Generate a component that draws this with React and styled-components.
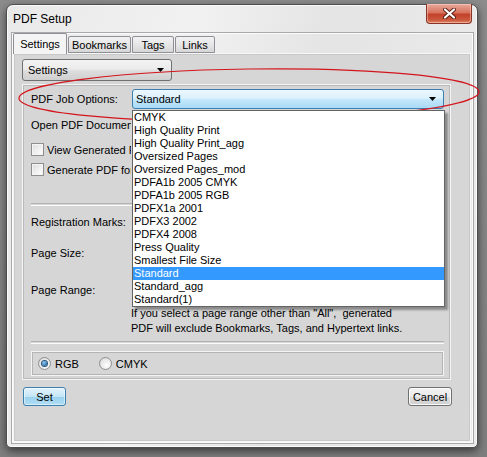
import React from 'react'
import styled, { createGlobalStyle } from 'styled-components'

const jobOptions = [
  'CMYK',
  'High Quality Print',
  'High Quality Print_agg',
  'Oversized Pages',
  'Oversized Pages_mod',
  'PDFA1b 2005 CMYK',
  'PDFA1b 2005 RGB',
  'PDFX1a 2001',
  'PDFX3 2002',
  'PDFX4 2008',
  'Press Quality',
  'Smallest File Size',
  'Standard',
  'Standard_agg',
  'Standard(1)',
]

// widths taken from the screenshot
const tabs = [
  { name: 'Settings', width: 54 },
  { name: 'Bookmarks', width: 63 },
  { name: 'Tags', width: 42 },
  { name: 'Links', width: 40 },
]

function Arrow() {
  return (
    <svg width="7" height="4" viewBox="0 0 7 4">
      <polygon points="0,0 7,0 3.5,4" fill="#000" />
    </svg>
  )
}

function App() {
  return (
    <Stage>
      <GlobalStyle />
      <Window>
        <TitleBar>
          <Title>PDF Setup</Title>
          <CloseButton>
            <svg width="13" height="11" viewBox="0 0 13 11">
              <path d="M2 1.5 L11 9.5 M11 1.5 L2 9.5" stroke="#5a1d14" strokeWidth="4" strokeLinecap="round" />
              <path d="M2 1.5 L11 9.5 M11 1.5 L2 9.5" stroke="#fff" strokeWidth="2.2" strokeLinecap="round" />
            </svg>
          </CloseButton>
        </TitleBar>

        <Client>
          <TabStrip>
            {tabs.map((t, i) => (
              <Tab key={t.name} $active={i === 0} $width={t.width}>{t.name}</Tab>
            ))}
          </TabStrip>

          <TabPanel>
            <Combo $width={150}>
              <span>Settings</span>
              <Arrow />
            </Combo>

            <GroupPanel>
              <Row $mt={0} $h={20}>
                <Label>PDF Job Options:</Label>
                <ComboWrap>
                  <Combo $focus>
                    <span>Standard</span>
                    <Arrow />
                  </Combo>
                  <DropList>
                    {jobOptions.map((o) => (
                      <DropItem key={o} $selected={o === 'Standard'}>{o}</DropItem>
                    ))}
                  </DropList>
                </ComboWrap>
              </Row>

              {/* these rows run under the open list, so they are clipped at its edge */}
              <Row $mt={8} $h={16}>
                <Label $clip>Open PDF Document after generation</Label>
              </Row>

              <Row $mt={9} $h={15}>
                <CheckBox />
                <CheckText>View Generated PDF</CheckText>
              </Row>
              <Row $mt={5} $h={15}>
                <CheckBox />
                <CheckText>Generate PDF for Selection</CheckText>
              </Row>

              <Separator $mt={26} />

              <Row $mt={8} $h={16}>
                <Label>Registration Marks:</Label>
              </Row>
              <Row $mt={15} $h={16}>
                <Label>Page Size:</Label>
              </Row>
              <Row $mt={21} $h={16}>
                <Label>Page Range:</Label>
              </Row>

              <Note>
                If you select a page range other than "All",&nbsp; generated
                <br />
                PDF will exclude Bookmarks, Tags, and Hypertext links.
              </Note>

              <Separator $mt={5} />

              <RadioBox>
                <RadioOption>
                  <Radio $checked />
                  <span>RGB</span>
                </RadioOption>
                <RadioOption>
                  <Radio />
                  <span>CMYK</span>
                </RadioOption>
              </RadioBox>
            </GroupPanel>

            <ButtonRow>
              <PushButton $default $width={43}>Set</PushButton>
              <PushButton $width={44}>Cancel</PushButton>
            </ButtonRow>
          </TabPanel>
        </Client>
      </Window>

      <Annotation width="487" height="457" viewBox="0 0 487 457">
        <ellipse cx="249" cy="95" rx="230" ry="26" transform="rotate(-0.8 249 95)" fill="none" stroke="#d3161d" strokeWidth="1.2" />
      </Annotation>
    </Stage>
  )
}

export default App

const GlobalStyle = createGlobalStyle`
  html, body {
    margin: 0;
    padding: 0;
    width: 487px;
    height: 457px;
    overflow: hidden;
    background: #8a8a8a;
  }
  body {
    font-family: "Liberation Sans", Arial, sans-serif;
    font-size: 11px;
    color: #000;
  }
`

const Stage = styled.div`
    position: relative;
    width: 487px;
    height: 457px;
    padding: 4px 0 0 6px;
    box-sizing: border-box;
    background: linear-gradient(180deg, #8c8c8c 0%, #7e7e7e 100%);
`

const Window = styled.div`
    width: 472px;
    height: 444px;
    box-sizing: border-box;
    display: flex;
    flex-direction: column;
    padding: 0 4px 4px 5px;
    border: 1px solid #4d4d4d;
    border-radius: 7px 7px 5px 5px;
    background: linear-gradient(100deg, #e9e9e9 0%, #f1f1f1 35%, #e4e4e4 60%, #ececec 100%);
    box-shadow: 0 3px 9px rgba(0, 0, 0, 0.55), inset 0 0 0 1px #fafafa;
`

const TitleBar = styled.div`
    height: 28px;
    display: flex;
    align-items: flex-start;
    justify-content: space-between;
`

const Title = styled.div`
    padding: 7px 0 0 1px;
    font-size: 12px;
    line-height: 15px;
    color: #000;
`

const CloseButton = styled.div`
    margin: -1px 1px 0 0;
    width: 46px;
    height: 20px;
    box-sizing: border-box;
    display: flex;
    align-items: center;
    justify-content: center;
    border: 1px solid #8b3326;
    border-top: none;
    border-radius: 0 0 4px 4px;
    background: linear-gradient(180deg, #e9a99b 0%, #d8735e 45%, #c2412b 55%, #cc5a3f 85%, #e08d6c 100%);
    box-shadow: inset 0 0 0 1px rgba(255, 220, 210, 0.45);
`

const Client = styled.div`
    flex: 1;
    display: flex;
    flex-direction: column;
    border: 1px solid #fbfbfb;
    box-shadow: 0 0 0 1px #a9a9a9;
`

const TabStrip = styled.div`
    height: 19px;
    display: flex;
    align-items: flex-end;
    position: relative;
    z-index: 1;
`

const Tab = styled.div`
    box-sizing: border-box;
    width: ${(p) => p.$width}px;
    height: ${(p) => (p.$active ? '21px' : '17px')};
    margin-bottom: ${(p) => (p.$active ? '-1px' : '0')};
    padding-top: ${(p) => (p.$active ? '3px' : '1px')};
    margin-left: ${(p) => (p.$active ? '0' : '1px')};
    text-align: center;
    line-height: 14px;
    border: 1px solid #8e9096;
    border-bottom: ${(p) => (p.$active ? 'none' : '1px solid #8e9096')};
    border-radius: 2px 2px 0 0;
    background: ${(p) =>
      p.$active
        ? '#f4f4f4'
        : 'linear-gradient(180deg, #f2f2f2 0%, #e6e6e6 50%, #d6d6d6 100%)'};
    white-space: nowrap;
`

const TabPanel = styled.div`
    flex: 1;
    margin-right: 1px;
    padding: 5px 8px 0 8px;
    border: 1px solid #f7f7f7;
    box-shadow: inset 0 0 0 1px #c8c8c8;
    background: #d6d6d6;
    display: flex;
    flex-direction: column;
`

const Combo = styled.div`
    box-sizing: border-box;
    width: ${(p) => (p.$width ? `${p.$width}px` : '100%')};
    height: ${(p) => (p.$focus ? '20px' : '22px')};
    display: flex;
    align-items: center;
    justify-content: space-between;
    padding: 0 7px 0 ${(p) => (p.$focus ? '3px' : '5px')};
    border: 1px solid ${(p) => (p.$focus ? '#3c7fb1' : '#707070')};
    border-radius: 3px;
    background: ${(p) =>
      p.$focus
        ? 'linear-gradient(180deg, #ecf7fd 0%, #dcf1fc 45%, #c1e6fc 55%, #a9daf6 100%)'
        : 'linear-gradient(180deg, #f3f3f3 0%, #ebebeb 45%, #dddddd 55%, #cfcfcf 100%)'};
    span {
        line-height: 14px;
    }
`

const GroupPanel = styled.div`
    margin-top: 3px;
    width: 429px;
    height: 296px;
    box-sizing: border-box;
    padding: 4px 6px 0 8px;
    border: 1px solid #f4f4f4;
    box-shadow: inset 0 0 0 1px #b9b9b9;
    display: flex;
    flex-direction: column;
`

const Row = styled.div`
    margin-top: ${(p) => p.$mt}px;
    height: ${(p) => p.$h}px;
    display: flex;
    align-items: center;
    white-space: nowrap;
`

const Label = styled.div`
    width: ${(p) => (p.$clip ? '100px' : '101px')};
    flex-shrink: 0;
    white-space: nowrap;
    overflow: ${(p) => (p.$clip ? 'hidden' : 'visible')};
    line-height: 14px;
`

const ComboWrap = styled.div`
    position: relative;
    flex: 1;
    height: 20px;
`

const DropList = styled.div`
    position: absolute;
    top: 21px;
    left: 0;
    width: 313px;
    box-sizing: border-box;
    border: 1px solid #646464;
    background: #fff;
    z-index: 5;
    box-shadow: 3px 3px 2px rgba(0, 0, 0, 0.35);
`

const DropItem = styled.div`
    height: 13px;
    line-height: 13px;
    padding-left: 1px;
    white-space: nowrap;
    background: ${(p) => (p.$selected ? '#3399ff' : 'transparent')};
    color: ${(p) => (p.$selected ? '#fff' : '#000')};
`

const CheckBox = styled.div`
    width: 13px;
    height: 13px;
    box-sizing: border-box;
    flex-shrink: 0;
    border: 1px solid #8f8f8f;
    background: linear-gradient(135deg, #dcdcdc 0%, #f2f2f2 60%, #ffffff 100%);
    box-shadow: inset 0 0 0 1px #f4f4f4;
`

const CheckText = styled.span`
    margin-left: 3px;
    width: 84px;
    overflow: hidden;
    line-height: 14px;
`

const Separator = styled.div`
    margin-top: ${(p) => p.$mt}px;
    height: 1px;
    border-top: 1px solid #b2b2b2;
    border-bottom: 1px solid #fbfbfb;
    flex-shrink: 0;
`

const Note = styled.div`
    margin-top: 8px;
    padding-left: 100px;
    line-height: 15px;
    white-space: nowrap;
`

const RadioBox = styled.div`
    margin-top: 7px;
    height: 25px;
    box-sizing: border-box;
    display: flex;
    align-items: center;
    gap: 20px;
    padding-left: 6px;
    border: 1px solid #f4f4f4;
    box-shadow: inset 0 0 0 1px #b4b4b4;
`

const RadioOption = styled.label`
    display: flex;
    align-items: center;
    gap: 4px;
    line-height: 14px;
`

const Radio = styled.span`
    width: 13px;
    height: 13px;
    box-sizing: border-box;
    border-radius: 50%;
    border: 1px solid #8e8f8f;
    background: radial-gradient(circle at 60% 65%, #ffffff 0%, #e6e6e6 60%, #cfcfcf 100%);
    display: flex;
    align-items: center;
    justify-content: center;
    &::after {
        content: '';
        display: ${(p) => (p.$checked ? 'block' : 'none')};
        width: 5px;
        height: 5px;
        border-radius: 50%;
        background: radial-gradient(circle at 40% 35%, #8fd0f7 0%, #1b5f96 80%);
        box-shadow: 0 0 0 1px #27577e;
    }
`

const ButtonRow = styled.div`
    margin-top: 7px;
    width: 430px;
    display: flex;
    justify-content: space-between;
    padding-left: 1px;
    box-sizing: border-box;
`

const PushButton = styled.div`
    width: ${(p) => p.$width}px;
    height: 19px;
    box-sizing: border-box;
    display: flex;
    align-items: center;
    justify-content: center;
    border: 1px solid ${(p) => (p.$default ? '#3c7fb1' : '#707070')};
    border-radius: 3px;
    background: ${(p) =>
      p.$default
        ? 'linear-gradient(180deg, #e5f4fc 0%, #c4e5f6 50%, #98d1ef 51%, #b2ddf3 100%)'
        : 'linear-gradient(180deg, #f2f2f2 0%, #ebebeb 50%, #dddddd 51%, #cfcfcf 100%)'};
    box-shadow: inset 0 0 0 1px ${(p) => (p.$default ? 'rgba(255,255,255,0.5)' : '#fbfbfb')};
`

const Annotation = styled.svg`
    position: absolute;
    top: 0;
    left: 0;
    pointer-events: none;
`
